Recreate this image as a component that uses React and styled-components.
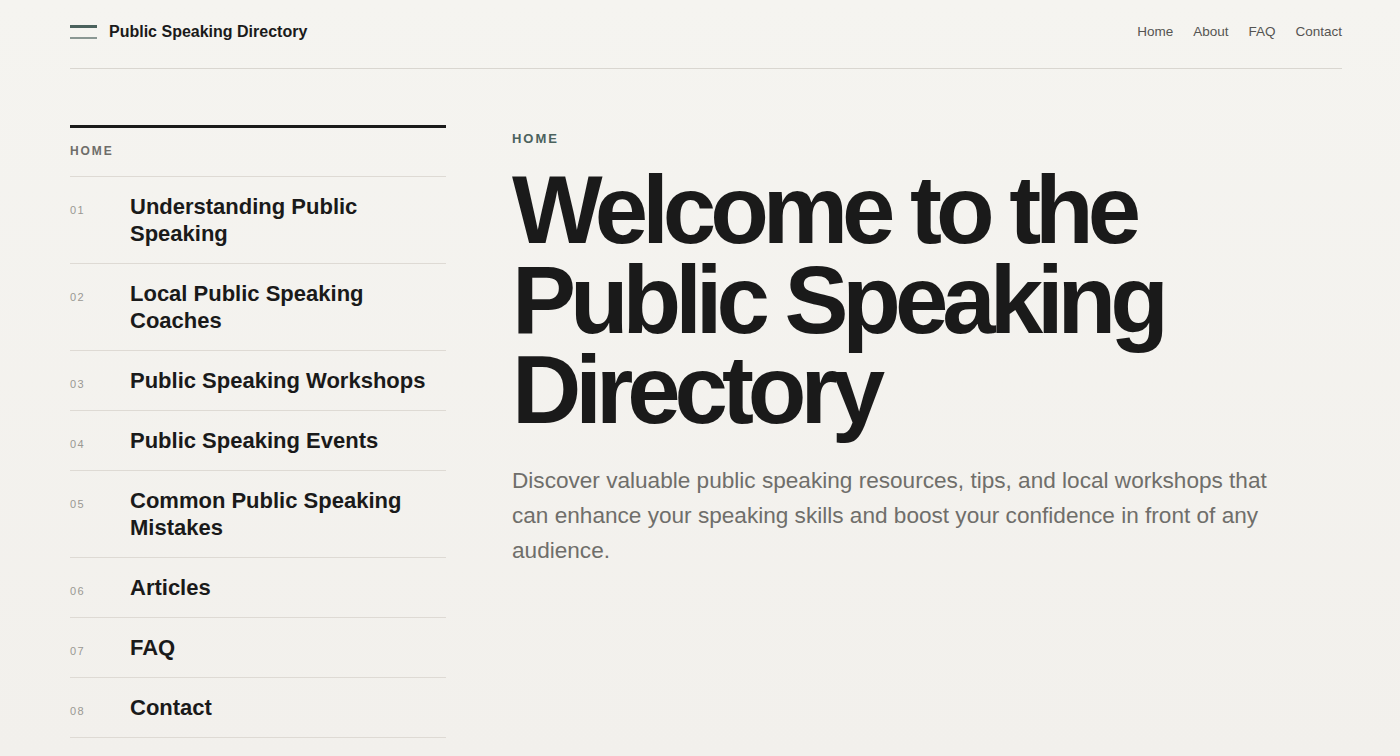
import React from 'react'
import styled, { createGlobalStyle } from 'styled-components'

const GlobalStyle = createGlobalStyle`
    html, body {
        margin: 0;
        padding: 0;
        background: #f4f3ef;
    }
    body {
        font-family: "Liberation Sans", Arial, Helvetica, sans-serif;
        color: #1a1a1a;
        -webkit-font-smoothing: antialiased;
    }
    * {
        box-sizing: border-box;
    }
`

const Page = styled.div`
    min-height: 756px;
    background: linear-gradient(180deg, #f5f4f0 0%, #f2f0ec 100%);
    padding: 0 58px 0 70px;
    overflow: hidden;
`

const Header = styled.header`
    height: 69px;
    display: flex;
    align-items: center;
    justify-content: space-between;
    border-bottom: 1px solid #d9d6d0;
    padding-bottom: 5px;
`

const Brand = styled.a`
    display: flex;
    align-items: center;
    gap: 12px;
    font-size: 16px;
    font-weight: 700;
    color: #1a1a1a;
    text-decoration: none;
`

const BrandMark = styled.span`
    display: flex;
    flex-direction: column;
    gap: 9px;
    width: 27px;

    &::before, &::after {
        content: "";
        display: block;
        width: 100%;
    }
    &::before {
        height: 3px;
        background: #4b625d;
    }
    &::after {
        height: 2px;
        background: #8a9793;
    }
`

const Nav = styled.nav`
    display: flex;
    gap: 20px;
`

const NavLink = styled.a`
    font-size: 13.5px;
    color: #555452;
    text-decoration: none;
`

const Layout = styled.div`
    display: grid;
    grid-template-columns: 376px 1fr;
    column-gap: 66px;
    padding-top: 56px;
`

const Sidebar = styled.aside`
    border-top: 3px solid #1a1a1a;
`

const SideLabel = styled.div`
    font-size: 12px;
    font-weight: 700;
    letter-spacing: 0.16em;
    text-transform: uppercase;
    color: #6e6d69;
    padding: 16px 0 18px;
    border-bottom: 1px solid #dedad4;
`

const SideItem = styled.a`
    display: flex;
    align-items: baseline;
    padding: 16px 0;
    border-bottom: 1px solid #dedad4;
    text-decoration: none;
`

const ItemNumber = styled.span`
    flex: 0 0 60px;
    font-size: 11px;
    letter-spacing: 0.12em;
    color: #9a9893;
`

const ItemTitle = styled.span`
    font-size: 22px;
    font-weight: 700;
    line-height: 27px;
    color: #1a1a1a;
    padding-right: 16px;
`

const Main = styled.main`
    padding-top: 6px;
`

const Crumb = styled.div`
    font-size: 13px;
    font-weight: 700;
    letter-spacing: 0.15em;
    text-transform: uppercase;
    color: #4b625d;
    line-height: 15px;
    margin-bottom: 19px;
`

const Title = styled.h1`
    margin: 0;
    font-size: 96px;
    font-weight: 700;
    line-height: 90px;
    letter-spacing: -0.063em;
    color: #1a1a1a;
`

const Lead = styled.p`
    margin: 28px 0 0;
    max-width: 780px;
    font-size: 22.6px;
    line-height: 35px;
    color: #6f6e6a;
`

const items = [
    'Understanding Public Speaking',
    'Local Public Speaking Coaches',
    'Public Speaking Workshops',
    'Public Speaking Events',
    'Common Public Speaking Mistakes',
    'Articles',
    'FAQ',
    'Contact',
]

function App() {
    return (
        <>
            <GlobalStyle />
            <Page>
                <Header>
                    <Brand href="#">
                        <BrandMark />
                        Public Speaking Directory
                    </Brand>
                    <Nav>
                        <NavLink href="#">Home</NavLink>
                        <NavLink href="#">About</NavLink>
                        <NavLink href="#">FAQ</NavLink>
                        <NavLink href="#">Contact</NavLink>
                    </Nav>
                </Header>

                <Layout>
                    <Sidebar>
                        <SideLabel>Home</SideLabel>
                        {items.map((title, i) => (
                            <SideItem href="#" key={title}>
                                <ItemNumber>{String(i + 1).padStart(2, '0')}</ItemNumber>
                                <ItemTitle>{title}</ItemTitle>
                            </SideItem>
                        ))}
                    </Sidebar>

                    <Main>
                        <Crumb>Home</Crumb>
                        <Title>
                            Welcome to the<br />
                            Public Speaking<br />
                            Directory
                        </Title>
                        <Lead>
                            Discover valuable public speaking resources, tips, and local workshops that
                            can enhance your speaking skills and boost your confidence in front of any
                            audience.
                        </Lead>
                    </Main>
                </Layout>
            </Page>
        </>
    )
}

export default App
